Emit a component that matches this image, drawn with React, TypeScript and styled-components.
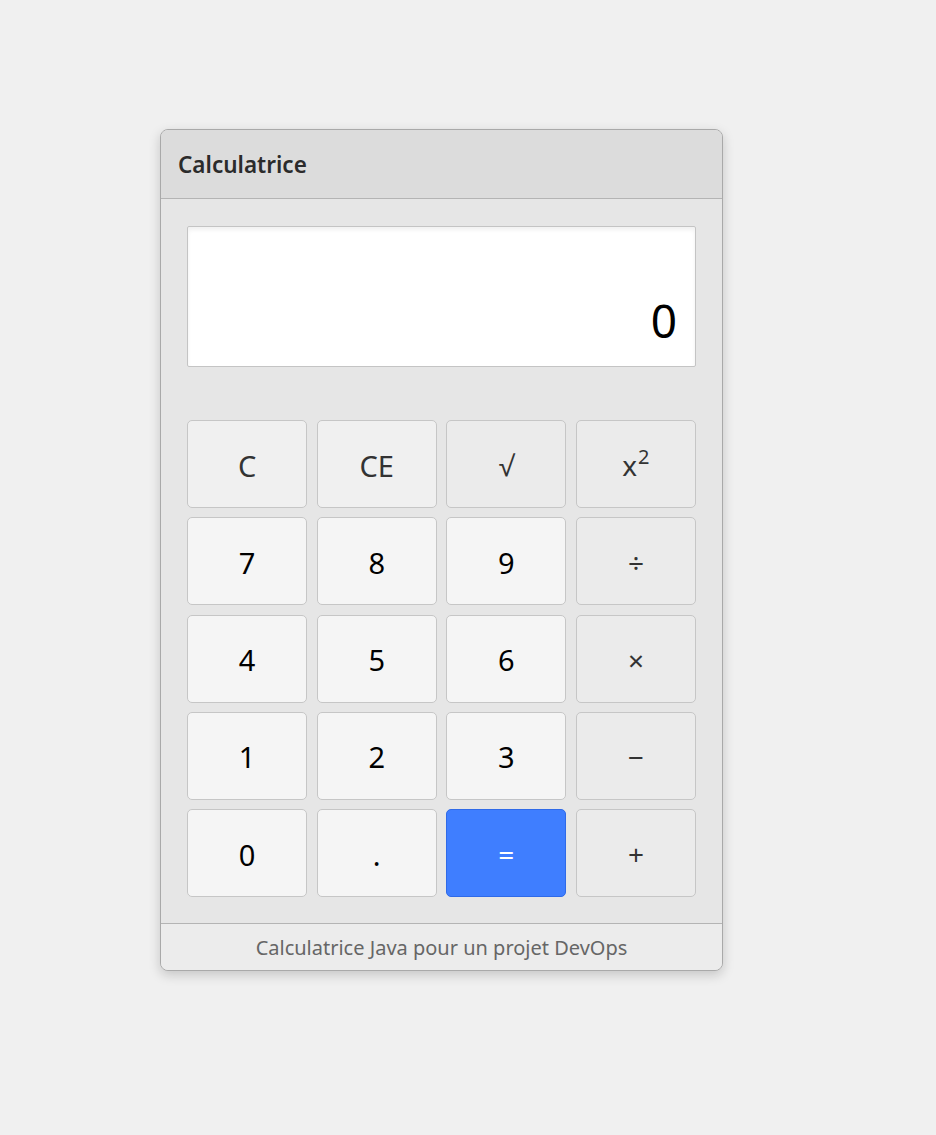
import { FC } from 'react';
import styled, { createGlobalStyle } from 'styled-components';

type Kind = 'func' | 'digit' | 'op' | 'equals';

type Key = {
	label: string;
	kind: Kind;
	sup?: string;
};

const KEYS: Key[] = [
	{ label: 'C', kind: 'func' },
	{ label: 'CE', kind: 'func' },
	{ label: '√', kind: 'op' },
	{ label: 'x', kind: 'op', sup: '2' },
	{ label: '7', kind: 'digit' },
	{ label: '8', kind: 'digit' },
	{ label: '9', kind: 'digit' },
	{ label: '÷', kind: 'op' },
	{ label: '4', kind: 'digit' },
	{ label: '5', kind: 'digit' },
	{ label: '6', kind: 'digit' },
	{ label: '×', kind: 'op' },
	{ label: '1', kind: 'digit' },
	{ label: '2', kind: 'digit' },
	{ label: '3', kind: 'digit' },
	{ label: '−', kind: 'op' },
	{ label: '0', kind: 'digit' },
	{ label: '.', kind: 'digit' },
	{ label: '=', kind: 'equals' },
	{ label: '+', kind: 'op' },
];

const App: FC = () => {
	return (
		<>
			<GlobalStyle />
			<Page>
				<Window>
					<Header>
						<Title>Calculatrice</Title>
					</Header>
					<Body>
						<Display>
							<Value>0</Value>
						</Display>
						<Keypad>
							{KEYS.map((k, i) => (
								<KeyButton key={i} $kind={k.kind}>
									{k.label}
									{k.sup && <Sup>{k.sup}</Sup>}
								</KeyButton>
							))}
						</Keypad>
					</Body>
					<Footer>Calculatrice Java pour un projet DevOps</Footer>
				</Window>
			</Page>
		</>
	);
};

const GlobalStyle = createGlobalStyle`
	html, body {
		margin: 0;
		padding: 0;
		background: #f0f0f0;
		font-family: 'Noto Sans', 'Open Sans', sans-serif;
	}
`;

const Page = styled.div`
	min-height: 1135px;
	padding: 129px 0 0 160px;
	box-sizing: border-box;
`;

const Window = styled.div`
	width: 563px;
	border: 1px solid #a9a9a9;
	border-radius: 8px;
	background: #e6e6e6;
	box-shadow: 0 4px 12px rgba(0, 0, 0, 0.18);
	overflow: hidden;
	box-sizing: border-box;
`;

const Header = styled.div`
	height: 68px;
	display: flex;
	align-items: center;
	padding: 0 17px;
	background: #dcdcdc;
	border-bottom: 1px solid #b4b4b4;
`;

const Title = styled.div`
	font-size: 22.5px;
	font-weight: 600;
	color: #2b2b2b;
`;

const Body = styled.div`
	padding: 27px 26px 26px 26px;
	display: flex;
	flex-direction: column;
	gap: 53px;
`;

const Display = styled.div`
	height: 141px;
	background: #fff;
	border: 1px solid #c4c4c4;
	border-radius: 2px;
	box-shadow: inset 0 3px 4px rgba(0, 0, 0, 0.06);
	display: flex;
	align-items: flex-end;
	justify-content: flex-end;
	padding: 0 18px 23px 0;
	box-sizing: border-box;
`;

const Value = styled.div`
	font-size: 46px;
	line-height: 1;
	color: #000;
`;

const Keypad = styled.div`
	display: grid;
	grid-template-columns: repeat(4, 1fr);
	grid-auto-rows: 88px;
	column-gap: 9.5px;
	row-gap: 9.25px;
`;

const bg: Record<Kind, string> = {
	func: '#f0f0f0',
	digit: '#f5f5f5',
	op: '#ebebeb',
	equals: '#3f7eff',
};

const KeyButton = styled.div<{ $kind: Kind }>`
	display: flex;
	align-items: center;
	justify-content: center;
	background: ${(p) => bg[p.$kind]};
	border: 1px solid ${(p) => (p.$kind === 'equals' ? '#2f6ae8' : '#c6c6c6')};
	border-radius: 5px;
	font-size: ${(p) => (p.$kind === 'op' || p.$kind === 'equals' ? '28px' : '29px')};
	color: ${(p) => (p.$kind === 'equals' ? '#fff' : p.$kind === 'digit' ? '#000' : '#333')};
	padding-top: 2px;
	box-sizing: border-box;
	cursor: pointer;
`;

const Sup = styled.span`
	font-size: 20px;
	align-self: flex-start;
	margin-top: 20px;
	margin-left: 1px;
`;

const Footer = styled.div`
	height: 45px;
	display: flex;
	align-items: center;
	justify-content: center;
	background: #ececec;
	border-top: 1px solid #b4b4b4;
	font-size: 20px;
	color: #666;
	padding-top: 1px;
`;

export default App;
